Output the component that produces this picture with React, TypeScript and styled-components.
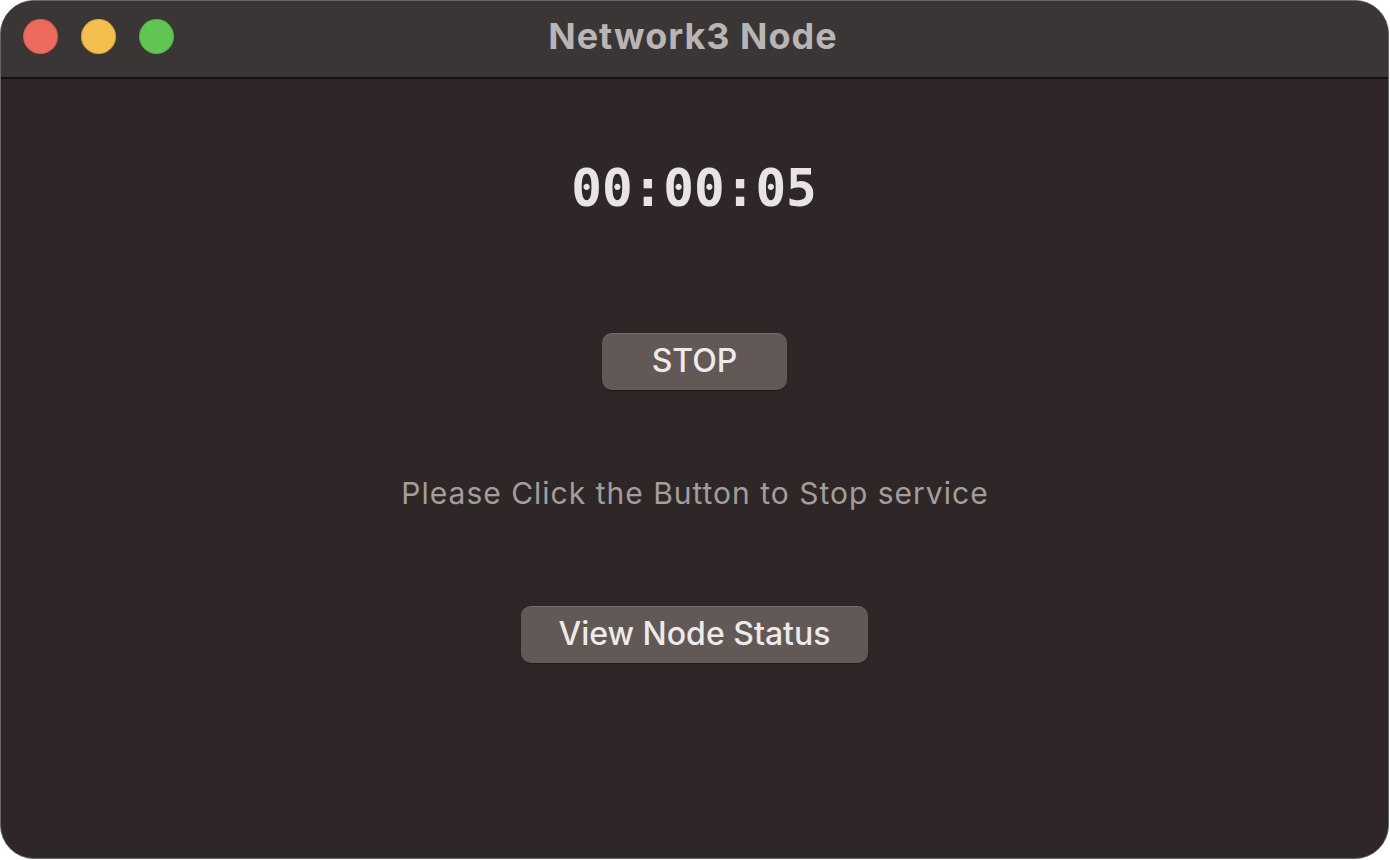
import React from "react";
import styled, { createGlobalStyle } from "styled-components";

const Global = createGlobalStyle`
  html, body { margin: 0; padding: 0; background: #ffffff; }
  body { font-family: "Inter", "Liberation Sans", sans-serif; }
`;

const Window = styled.div`
  box-sizing: border-box;
  width: 1389px;
  height: 859px;
  border-radius: 34px;
  border: 1px solid #6b6666;
  background: #2f2727;
  overflow: hidden;
  display: flex;
  flex-direction: column;
`;

const TitleBar = styled.div`
  position: relative;
  height: 76px;
  flex: none;
  background: #3b3636;
  border-bottom: 2px solid #131010;
  display: flex;
  align-items: center;
  justify-content: center;
`;

const Lights = styled.div`
  position: absolute;
  left: 22px;
  top: 18px;
  display: flex;
  gap: 23px;
`;

const Light = styled.span<{ $c: string }>`
  width: 35px;
  height: 35px;
  border-radius: 50%;
  background: ${(p) => p.$c};
  box-shadow: inset 0 0 0 1px rgba(0, 0, 0, 0.12);
`;

const Title = styled.div`
  font-family: "Inter", "Liberation Sans", sans-serif;
  font-weight: 700;
  font-size: 36px;
  letter-spacing: 1px;
  color: #b9b5b5;
  margin-left: -3px;
  margin-top: -6px;
`;

const Content = styled.div`
  flex: 1;
  display: flex;
  flex-direction: column;
  align-items: center;
  padding-top: 80px;
`;

const Timer = styled.div`
  font-family: "DejaVu Sans Mono", "Liberation Mono", monospace;
  font-weight: 700;
  font-size: 51px;
  line-height: 60px;
  color: #e8e4e4;
  margin-left: -1px;
`;

const Button = styled.button<{ $w: number }>`
  box-sizing: border-box;
  width: ${(p) => p.$w}px;
  height: 57px;
  border-radius: 10px;
  border: none;
  background: #625957;
  box-shadow: inset 0 1px 0 rgba(255, 255, 255, 0.12), 0 1px 1px rgba(0, 0, 0, 0.35);
  color: #eeeaea;
  font-family: "Inter", "Liberation Sans", sans-serif;
  font-size: 32px;
  font-weight: 500;
  display: flex;
  align-items: center;
  justify-content: center;
  padding: 0 0 2px;
  cursor: pointer;
`;

const Message = styled.div`
  font-family: "Inter", "Liberation Sans", sans-serif;
  font-size: 30px;
  letter-spacing: 1px;
  line-height: 34px;
  color: #a39d9c;
  margin-left: 1px;
`;

const Gap = styled.div<{ $h: number }>`
  height: ${(p) => p.$h}px;
  flex: none;
`;

export default function App() {
  return (
    <>
      <Global />
      <Window>
        <TitleBar>
          <Lights>
            <Light $c="#ec6a5e" />
            <Light $c="#f4bf4f" />
            <Light $c="#61c554" />
          </Lights>
          <Title>Network3 Node</Title>
        </TitleBar>
        <Content>
          <Timer>00:00:05</Timer>
          <Gap $h={114} />
          <Button $w={185}>STOP</Button>
          <Gap $h={86} />
          <Message>Please Click the Button to Stop service</Message>
          <Gap $h={96} />
          <Button $w={347}>View Node Status</Button>
        </Content>
      </Window>
    </>
  );
}
